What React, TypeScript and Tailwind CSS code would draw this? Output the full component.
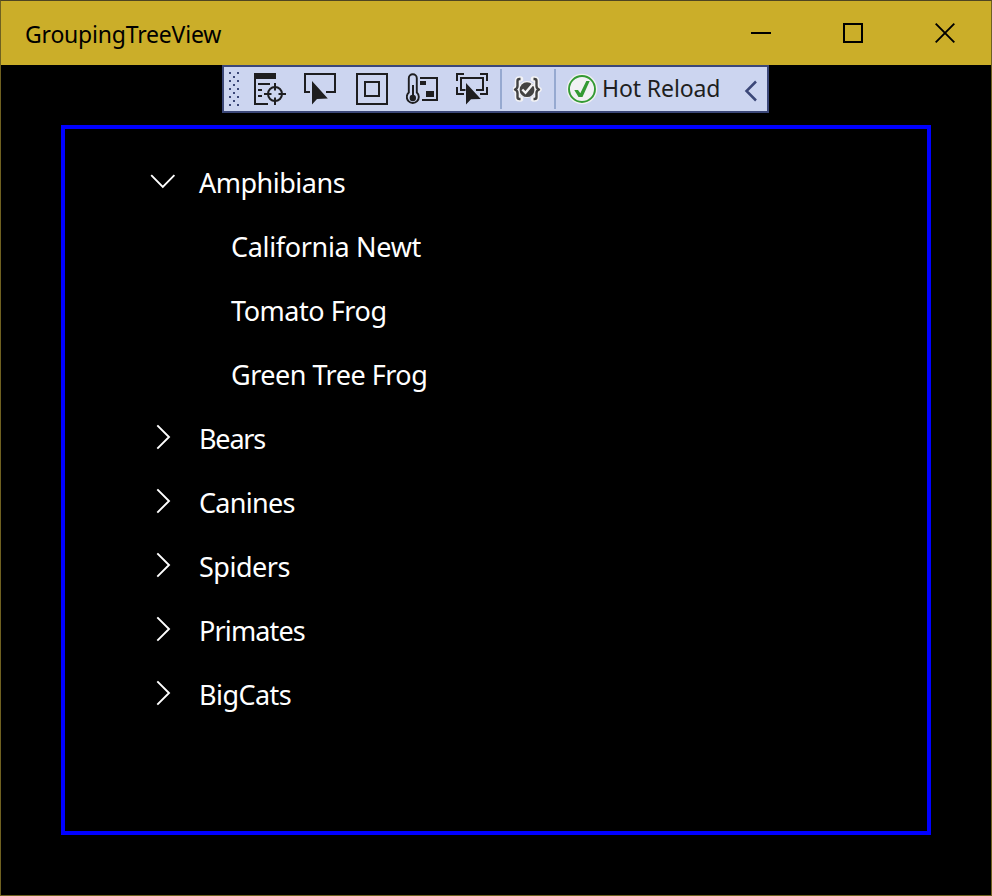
import React from 'react';

const INK = '#1e1e20';

type TreeItem = { label: string; kind: 'open' | 'closed' | 'leaf'; tracking: string };

const items: TreeItem[] = [
  { label: 'Amphibians', kind: 'open', tracking: 'tracking-[-0.5px]' },
  { label: 'California Newt', kind: 'leaf', tracking: 'tracking-[-0.33px]' },
  { label: 'Tomato Frog', kind: 'leaf', tracking: 'tracking-[-0.45px]' },
  { label: 'Green Tree Frog', kind: 'leaf', tracking: 'tracking-[-0.5px]' },
  { label: 'Bears', kind: 'closed', tracking: 'tracking-[-1.2px]' },
  { label: 'Canines', kind: 'closed', tracking: 'tracking-[-0.7px]' },
  { label: 'Spiders', kind: 'closed', tracking: 'tracking-[-0.5px]' },
  { label: 'Primates', kind: 'closed', tracking: 'tracking-[-0.85px]' },
  { label: 'BigCats', kind: 'closed', tracking: 'tracking-[-0.55px]' },
];

function TitleBar() {
  return (
    <header className="flex h-[64px] shrink-0 items-center bg-[#cbae29] pl-[24px] text-black">
      <h1 className="flex-1 text-[23px] leading-8 tracking-[-0.2px] whitespace-nowrap">
        <span className="inline-block pt-px">GroupingTreeView</span>
      </h1>
      <div className="flex">
        <button className="flex w-[92px] justify-center" aria-label="Minimize">
          <svg width="20" height="20" viewBox="0 0 20 20"><path d="M0 10h20" stroke="#000" strokeWidth="2" /></svg>
        </button>
        <button className="flex w-[92px] justify-center" aria-label="Maximize">
          <svg width="20" height="20" viewBox="0 0 20 20"><path d="M1 1h18v18H1z" fill="none" stroke="#000" strokeWidth="2" /></svg>
        </button>
        <button className="flex w-[92px] justify-center" aria-label="Close">
          <svg width="20" height="20" viewBox="0 0 20 20"><path d="M.7.7l18.6 18.6M19.3.7L.7 19.3" stroke="#000" strokeWidth="1.9" /></svg>
        </button>
      </div>
    </header>
  );
}

function Grip() {
  const dots: [number, number][] = [];
  for (let y = 0; y < 9; y++) {
    if (y % 2) dots.push([4, y * 4]);
    else dots.push([0, y * 4], [8, y * 4]);
  }
  return (
    <svg className="ml-[5px] shrink-0" width="10" height="34" viewBox="0 0 10 34" fill="#3b4778">
      {dots.map(([x, y]) => <rect key={`${x}-${y}`} x={x} y={y} width="2" height="2" />)}
    </svg>
  );
}

const BRACES =
  'M520.500 79h-1q-2 0-2 2v5q0 2.500-2.500 3.500 2.500 1 2.500 3.500v4q0 2 2 2h1M533.500 79h1q2 0 2 2v5q0 2.500 2.500 3.500-2.500 1-2.500 3.500v4q0 2-2 2h-1';

function DebugToolbar() {
  return (
    <div className="flex h-[48px] w-[547px] items-center border-2 border-[#3b4778] bg-[#ccd5f0]">
      <Grip />
      <svg className="ml-[15px] shrink-0" width="32" height="32" viewBox="254 73 32 32" fill={INK}>
        <path d="M254 73h22v6h-20v24h12v2h-14zM258 83h12v2h-12zM258 89h4v2h-4zM258 95h4v2h-4z" />
        <g fill="none" stroke={INK} strokeWidth="2">
          <circle cx="275" cy="94" r="7" />
          <path d="M275 83v7.500M275 97.500v7.500M264 94h7.500M278.500 94h7.500" />
        </g>
      </svg>
      <svg className="ml-[18px] shrink-0" width="32" height="32" viewBox="304 73 32 32" fill={INK}>
        <path d="M310 92h-5V74h30v18h-9" fill="none" stroke={INK} strokeWidth="2" />
        <path d="M312 81v23.500l5-5.500 10.800-.5z" />
      </svg>
      <svg className="ml-[20px] shrink-0" width="32" height="32" viewBox="356 73 32 32" fill="none" stroke={INK} strokeWidth="2">
        <path d="M357 74h30v30h-30zM365 82h14v14h-14z" />
      </svg>
      <svg className="ml-[18px] shrink-0" width="32" height="32" viewBox="406 73 32 32" fill={INK}>
        <path d="M408.800 92.500V78.200a4 4 0 0 1 8 0v14.300a6 6 0 1 1-8 0z" fill="none" stroke={INK} strokeWidth="1.900" />
        <circle cx="412.800" cy="98" r="3.200" />
        <path d="M412 85h2v12h-2zM420 77h18v24h-16v-2h14V79h-16zM420 81h6v4h-6zM426 91h8v6h-8z" />
      </svg>
      <svg className="ml-[18px] shrink-0" width="32" height="32" viewBox="456 73 32 32" fill={INK}>
        <path d="M457 81v-7h7M480 74h7v7M457 87v7h7M480 94h7v-7M465.500 90h-4.500V78h22v12h-7" fill="none" stroke={INK} strokeWidth="2" />
        <path d="M466 83v21.500l5-5.300 9.800-.2z" />
      </svg>
      <div className="ml-[12px] h-[40px] w-[2px] shrink-0 bg-[#96a9d0]" />
      <svg className="ml-[11px] shrink-0" width="30" height="32" viewBox="513 73 30 32">
        <g fill="none" strokeLinejoin="round">
          <path d={BRACES} stroke="#f3f3f5" strokeWidth="5.500" strokeLinecap="round" />
          <circle cx="527" cy="89.500" r="8.500" fill="#f3f3f5" />
          <path d={BRACES} stroke="#424242" strokeWidth="2.400" />
        </g>
        <circle cx="527" cy="89.700" r="7.400" fill="#424242" />
        <path d="M522.300 89.500l3.200 3.300 7-8.300" fill="none" stroke="#f3f3f5" strokeWidth="2.400" />
      </svg>
      <div className="ml-[11px] h-[40px] w-[2px] shrink-0 bg-[#96a9d0]" />
      <svg className="ml-[10px] shrink-0" width="32" height="32" viewBox="566 73 32 32">
        <circle cx="582" cy="89" r="15.300" fill="#f1f1f4" />
        <circle cx="582" cy="89" r="13" fill="none" stroke="#339a33" strokeWidth="1.900" />
        <path d="M574.300 90h3.700l2.300 3.300L586.300 81h3.400L582.500 97h-4z" fill="#339a33" />
      </svg>
      <span className="ml-[4px] w-[142px] pb-[2px] text-[23px] leading-8 tracking-[-0.1px] whitespace-nowrap text-[#1e1e20]">Hot Reload</span>
      <svg className="mt-[3px] shrink-0" width="14" height="22" viewBox="0 0 14 22">
        <path d="M12 1.500L2.500 11l9.500 9.500" fill="none" stroke="#3b4778" strokeWidth="2.500" />
      </svg>
    </div>
  );
}

function TreeRow({ item }: { item: TreeItem }) {
  return (
    <li className="flex h-[64px] items-center">
      <span className="flex w-[49px] shrink-0 pb-[4px]">
        {item.kind === 'open' && (
          <svg width="26" height="26" viewBox="0 0 26 26"><path d="M1.200 7.200L12.800 18.800 24.400 7.200" fill="none" stroke="#fff" strokeWidth="1.900" /></svg>
        )}
        {item.kind === 'closed' && (
          <svg width="26" height="26" viewBox="0 0 26 26"><path d="M7.300 1.400L19 13 7.300 24.600" fill="none" stroke="#fff" strokeWidth="1.900" /></svg>
        )}
      </span>
      <span className={`${item.kind === 'leaf' ? 'pl-[32px]' : ''} ${item.tracking} text-[27px] leading-9 whitespace-nowrap`}>{item.label}</span>
    </li>
  );
}

export default function App() {
  return (
    <div className="flex h-[896px] w-[992px] flex-col border border-t-[#4e4522] border-r-[#6f6120] border-b-[#6f6120] border-l-[#6f6120] bg-black font-['Noto_Sans','Open_Sans',sans-serif]">
      <TitleBar />
      <div className="flex h-[60px] shrink-0 pl-[221px]">
        <DebugToolbar />
      </div>
      <main className="ml-[60px] h-[710px] w-[870px] shrink-0 border-4 border-[#0000ff] text-white">
        <ul className="pt-[22px] pl-[85px]">
          {items.map((item) => <TreeRow key={item.label} item={item} />)}
        </ul>
      </main>
    </div>
  );
}
